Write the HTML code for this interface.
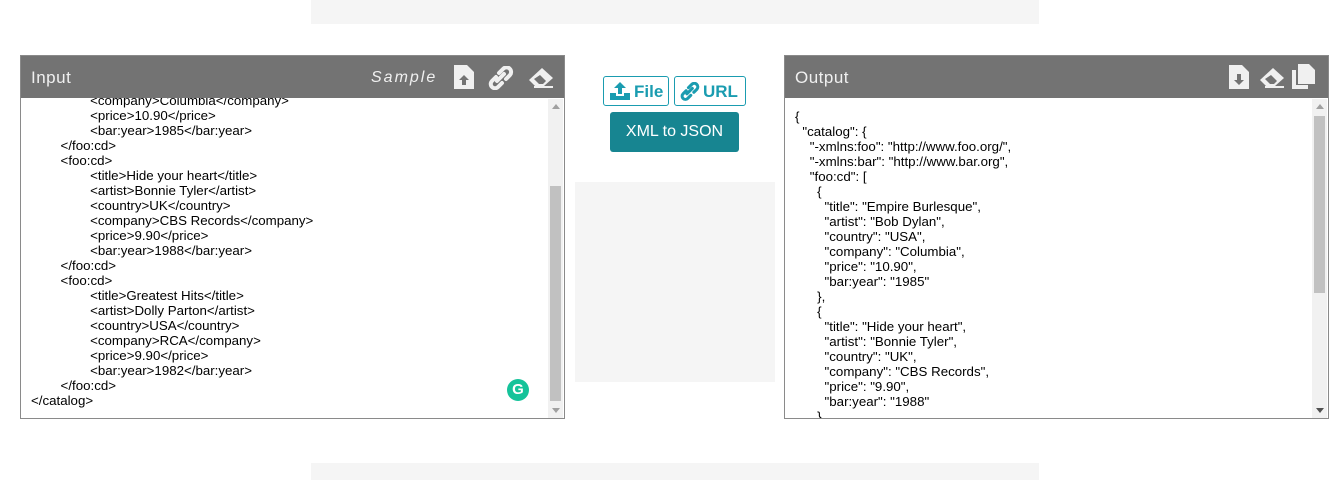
<!DOCTYPE html>
<html><head><style>
body{margin:0;width:1341px;height:480px;background:#fff;position:relative;overflow:hidden;font-family:"Liberation Sans",Arial,sans-serif}
.g{position:absolute;background:#f5f5f5}
.panel{position:absolute;top:55px;width:543px;height:362px;border:1px solid #8a8a8a;background:#fff;overflow:hidden}
.hd{height:42px;background:#737373;color:#f0f0f0;font-size:17px;letter-spacing:.5px;line-height:44px;padding-left:10px}
.txt{position:absolute;left:0;font-size:13.3px;line-height:15px;color:#000;white-space:pre;margin:0;font-family:"Liberation Sans",Arial,sans-serif}
.sb{position:absolute;right:1px;top:43px;width:15px;bottom:0;background:#f1f1f1}
.th{position:absolute;left:2px;width:11px;background:#c1c1c1}
.ar{position:absolute;left:4px;width:0;height:0;border-left:4px solid transparent;border-right:4px solid transparent}
.btn{position:absolute;border:1px solid #1a9cb0;border-radius:3px;color:#1a9cb0;font-weight:bold;font-size:17px;line-height:28px;background:#fff}
</style></head><body>
<div class="g" style="left:311px;top:0;width:728px;height:24px"></div>
<div class="g" style="left:311px;top:463px;width:728px;height:17px"></div>
<div class="g" style="left:575px;top:182px;width:200px;height:200px"></div>

<div class="panel" style="left:20px">
 <pre class="txt" style="top:37px;left:10px">                &lt;company&gt;Columbia&lt;/company&gt;
                &lt;price&gt;10.90&lt;/price&gt;
                &lt;bar:year&gt;1985&lt;/bar:year&gt;
        &lt;/foo:cd&gt;
        &lt;foo:cd&gt;
                &lt;title&gt;Hide your heart&lt;/title&gt;
                &lt;artist&gt;Bonnie Tyler&lt;/artist&gt;
                &lt;country&gt;UK&lt;/country&gt;
                &lt;company&gt;CBS Records&lt;/company&gt;
                &lt;price&gt;9.90&lt;/price&gt;
                &lt;bar:year&gt;1988&lt;/bar:year&gt;
        &lt;/foo:cd&gt;
        &lt;foo:cd&gt;
                &lt;title&gt;Greatest Hits&lt;/title&gt;
                &lt;artist&gt;Dolly Parton&lt;/artist&gt;
                &lt;country&gt;USA&lt;/country&gt;
                &lt;company&gt;RCA&lt;/company&gt;
                &lt;price&gt;9.90&lt;/price&gt;
                &lt;bar:year&gt;1982&lt;/bar:year&gt;
        &lt;/foo:cd&gt;
&lt;/catalog&gt;</pre>
 <div class="hd" style="position:absolute;top:0;left:0;right:0">Input
  <span style="position:absolute;left:350px;top:0;font-style:italic;letter-spacing:2px;font-size:16px">Sample</span>
  <svg style="position:absolute;left:433px;top:9px" width="20" height="24" viewBox="0 0 20 24"><path d="M0 0H13L20 7V24H0Z" fill="#f0f0f0"/><path d="M10 10L5 15H8V20H12V15H15Z" fill="#737373"/></svg>
  <svg style="position:absolute;left:467px;top:10px" width="26" height="24" viewBox="0 0 26 24"><g fill="none" stroke="#f0f0f0" stroke-width="4" stroke-linecap="round"><path d="M11 7L15 3A4 4 0 0 1 22 9L18 13"/><path d="M14 17L10 21A4 4 0 0 1 4 15L8 11"/><path d="M9 15L16 8"/></g></svg>
  <svg style="position:absolute;left:507px;top:11px" width="26" height="22" viewBox="0 0 26 22"><path d="M14 1L25 11L16 19H7L1 13Z" fill="#f0f0f0"/><path d="M6 12L11 17H15L18 14L12 8Z" fill="#737373"/><rect x="6" y="19" width="19" height="2" fill="#f0f0f0"/></svg>
 </div>
 <div class="sb"><div class="ar" style="top:5px;border-bottom:5px solid #a0a0a0"></div><div class="th" style="top:87px;height:215px"></div><div class="ar" style="bottom:5px;border-top:5px solid #a0a0a0"></div></div>
 <div style="position:absolute;left:486px;top:323px;width:22px;height:22px;border-radius:50%;background:#15c39a;color:#fff;font-weight:bold;font-size:15px;line-height:22px;text-align:center">G</div>
</div>

<div class="btn" style="left:603px;top:76px;width:64px;height:28px">
 <svg style="position:absolute;left:6px;top:5px" width="20" height="18" viewBox="0 0 20 18"><path d="M10 0L4 6H8V12H12V6H16Z" fill="#1a9cb0"/><path d="M0 11H6V14H14V11H20V18H0Z" fill="#1a9cb0"/></svg>
 <span style="position:absolute;left:30px;top:1px">File</span></div>
<div class="btn" style="left:674px;top:76px;width:70px;height:28px">
 <svg style="position:absolute;left:5px;top:5px" width="20" height="19" viewBox="0 0 26 24"><g fill="none" stroke="#1a9cb0" stroke-width="4" stroke-linecap="round"><path d="M11 7L15 3A4 4 0 0 1 22 9L18 13"/><path d="M14 17L10 21A4 4 0 0 1 4 15L8 11"/><path d="M9 15L16 8"/></g></svg>
 <span style="position:absolute;left:28px;top:1px">URL</span></div>
<div style="position:absolute;left:610px;top:112px;width:129px;height:40px;background:#178591;border-radius:3px;color:#fff;font-size:16px;line-height:40px;text-align:center">XML to JSON</div>

<div class="panel" style="left:784px">
 <pre class="txt" style="top:53px;left:10px">{
  "catalog": {
    "-xmlns:foo": "http://www.foo.org/",
    "-xmlns:bar": "http://www.bar.org",
    "foo:cd": [
      {
        "title": "Empire Burlesque",
        "artist": "Bob Dylan",
        "country": "USA",
        "company": "Columbia",
        "price": "10.90",
        "bar:year": "1985"
      },
      {
        "title": "Hide your heart",
        "artist": "Bonnie Tyler",
        "country": "UK",
        "company": "CBS Records",
        "price": "9.90",
        "bar:year": "1988"
      },</pre>
 <div class="hd" style="position:absolute;top:0;left:0;right:0">Output
  <svg style="position:absolute;left:444px;top:9px" width="20" height="24" viewBox="0 0 20 24"><path d="M0 0H13L20 7V24H0Z" fill="#f0f0f0"/><path d="M8 9V15H5L10 20L15 15H12V9Z" fill="#737373"/></svg>
  <svg style="position:absolute;left:474px;top:11px" width="26" height="22" viewBox="0 0 26 22"><path d="M14 1L25 11L16 19H7L1 13Z" fill="#f0f0f0"/><path d="M6 12L11 17H15L18 14L12 8Z" fill="#737373"/><rect x="6" y="19" width="19" height="2" fill="#f0f0f0"/></svg>
  <svg style="position:absolute;left:507px;top:8px" width="24" height="25" viewBox="0 0 24 25"><path d="M0 6H4V21H16V25H0Z" fill="#f0f0f0"/><path d="M6 0H17L23 6V20H6Z" fill="#f0f0f0"/></svg>
 </div>
 <div class="sb"><div class="ar" style="top:5px;border-bottom:5px solid #a0a0a0"></div><div class="th" style="top:17px;height:177px"></div><div class="ar" style="bottom:5px;border-top:5px solid #505050"></div></div>
</div>
</body></html>
